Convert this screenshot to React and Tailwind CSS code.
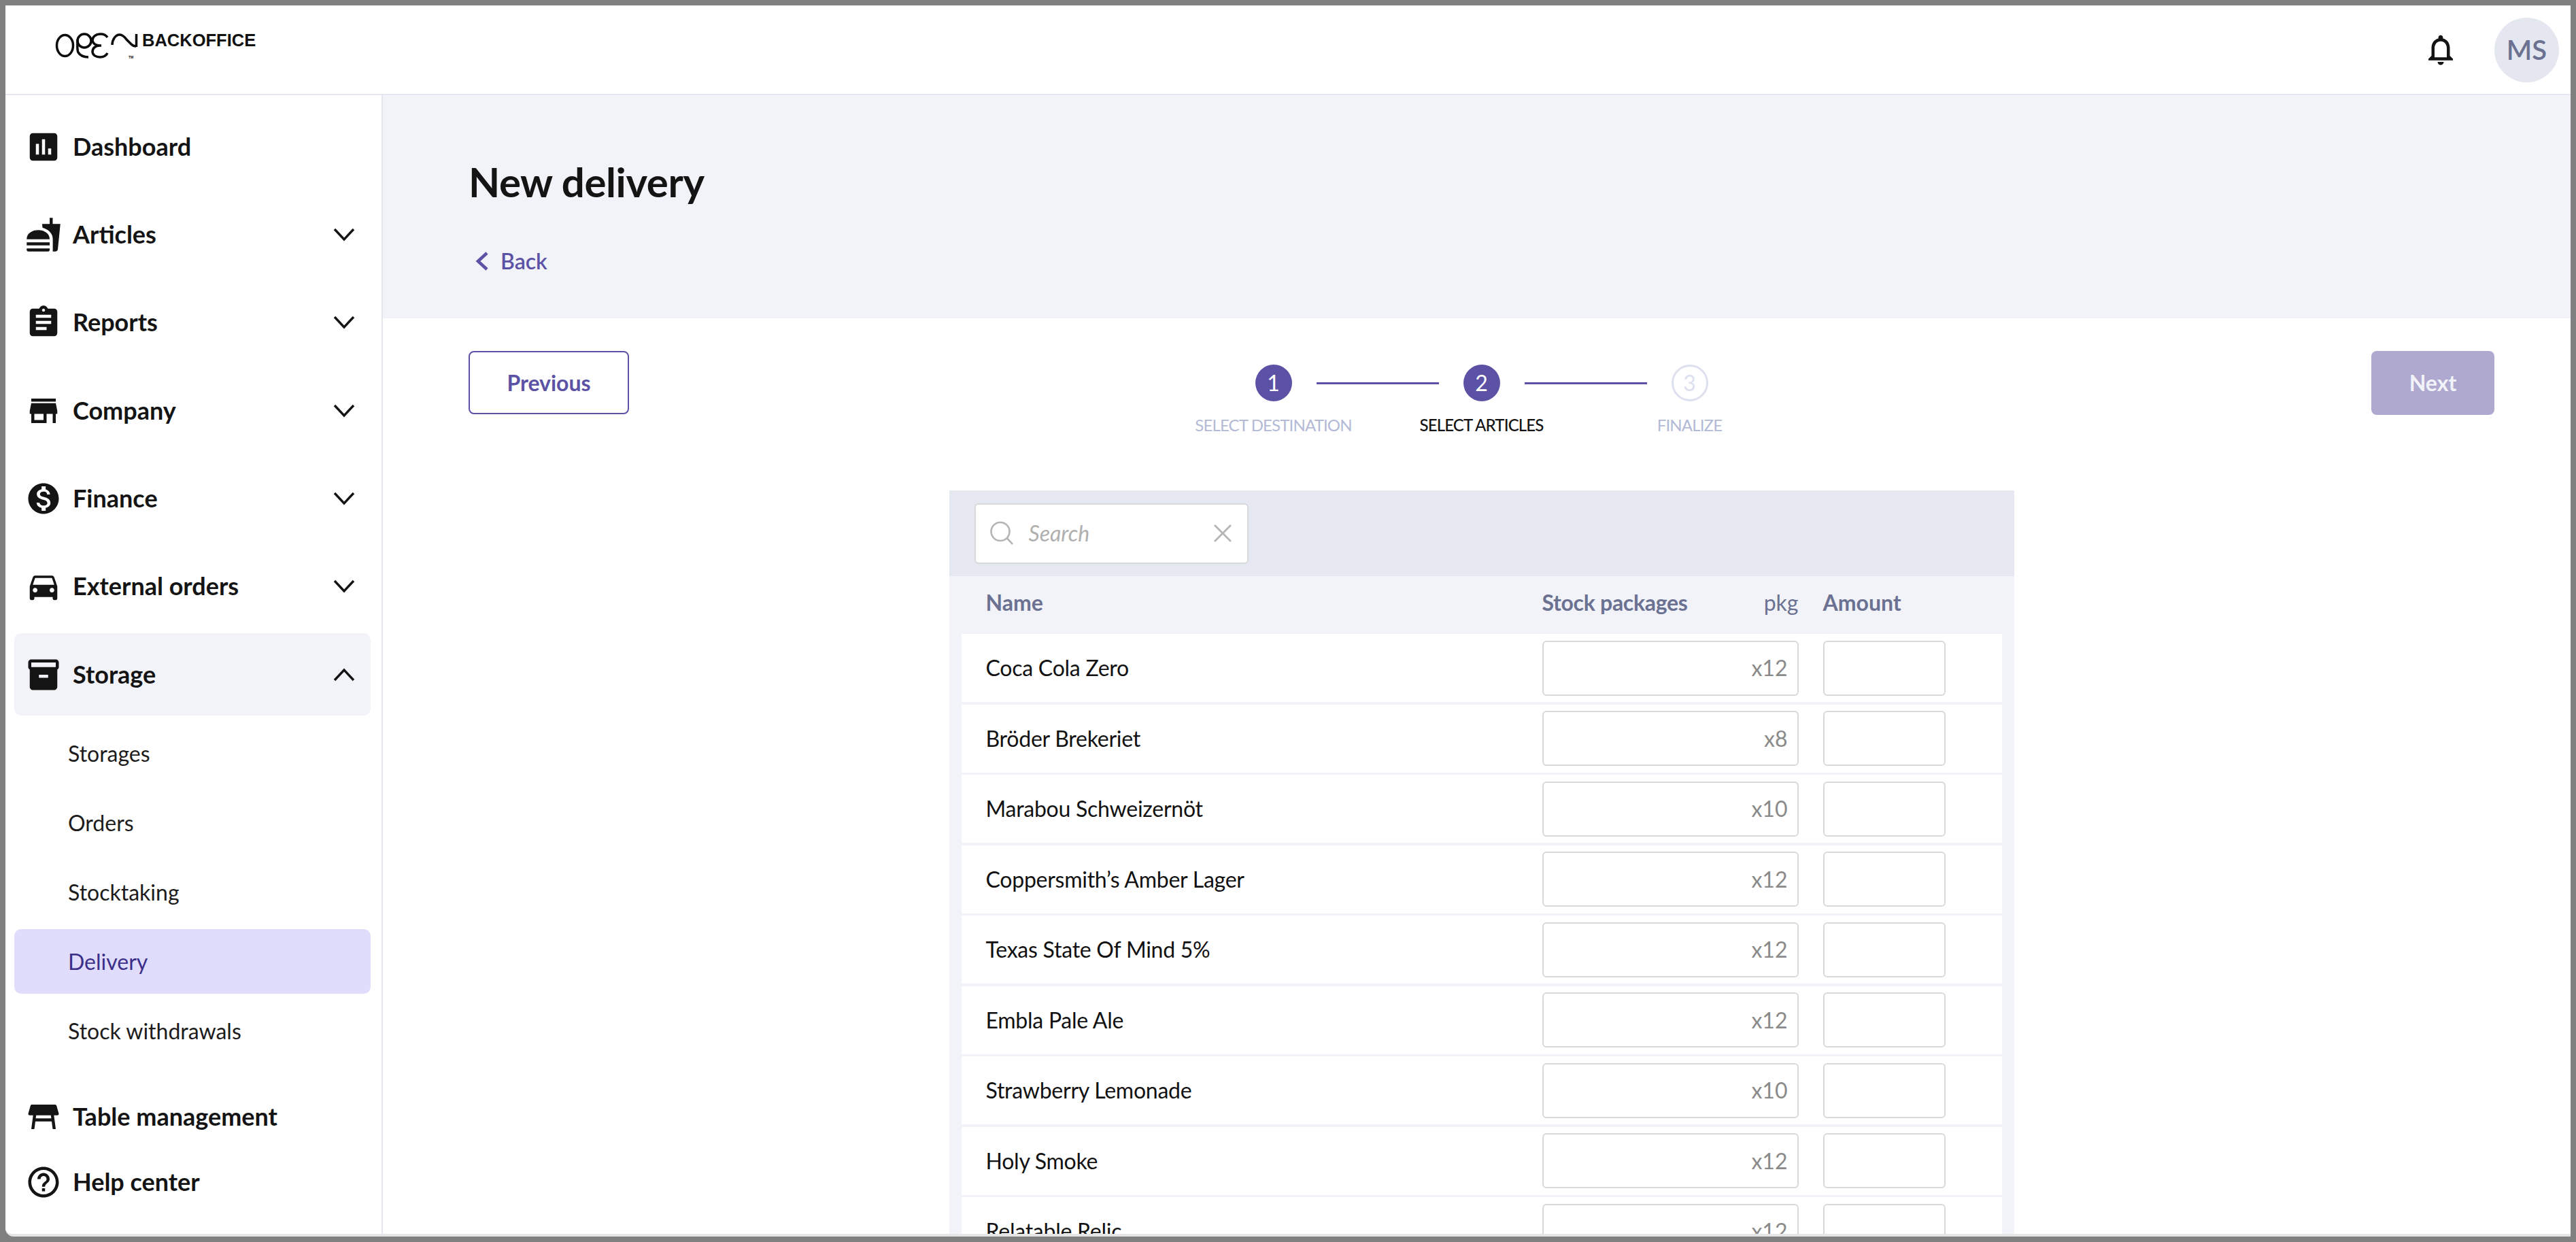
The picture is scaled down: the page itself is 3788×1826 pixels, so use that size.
import React from 'react';
import { MdAssessment, MdFastfood, MdAssignment, MdStore, MdMonetizationOn, MdDirectionsCar, MdInventory2, MdTableRestaurant, MdHelpOutline, MdNotificationsNone } from 'react-icons/md';

function Chevron({ up }) {
  return (
    <svg width="32" height="20" viewBox="0 0 32 20" fill="none" stroke="#141414" strokeWidth="3.4" className="shrink-0">
      <polyline points={up ? '2,18 16,3 30,18' : '2,2 16,17 30,2'} />
    </svg>
  );
}

function Logo() {
  return (
    <svg width="124" height="42" viewBox="80 46 124 42" fill="none" stroke="#0c0c0c" strokeWidth="3.5" className="shrink-0">
      <ellipse cx="95.5" cy="67" rx="12" ry="15.5" />
      <circle cx="124" cy="60" r="10" />
      <path d="M114 58c0 9-1 15 1 19 3 5 9 7 15 7" />
      <path d="M158 55c-2-3-6-5-10-5-7 0-12 4-12 9 0 5 5 8 11 8h2M147 67c-7 0-11 4-11 9 0 5 5 8 11 8 5 0 9-2 11-6" />
      <path d="M165 66c0-8 5-15 11-15 4 0 7 3 10 7l7 7c2 2 4 3 7 3" />
      <path d="M200.5 50v19" />
      <text x="189" y="85.5" fill="#111" stroke="none" fontSize="5" fontWeight="700" fontFamily="Liberation Sans, sans-serif">TM</text>
    </svg>
  );
}

function NavItem({ icon: Icon, label, chevron, up, active }) {
  return (
    <div className={`flex h-[121px] items-center rounded-[10px] pl-[16px] pr-[23px] ${active ? 'bg-[#f2f3f8]' : ''}`}>
      <Icon size={54} color="#141414" className="shrink-0" />
      <span className="ml-[16px] flex-1 pb-[2px] text-[36px] font-bold text-[#141414]">{label}</span>
      {chevron && <Chevron up={up} />}
    </div>
  );
}

function SubItem({ label, active }) {
  return (
    <div className={`flex h-[95px] items-center rounded-[10px] pl-[79px] text-[32px] ${active ? 'bg-[#e0dcfb] text-[#3b2f8a]' : 'text-[#1c1c1c]'}`}>
      {label}
    </div>
  );
}

function Sidebar() {
  return (
    <aside className="flex w-[555px] shrink-0 flex-col border-r-2 border-[#e5e7f0] bg-white pl-[13px] pr-[16px] pt-[15px]">
      <div className="flex flex-col gap-[8.4px]">
        <NavItem icon={MdAssessment} label="Dashboard" />
        <NavItem icon={MdFastfood} label="Articles" chevron />
        <NavItem icon={MdAssignment} label="Reports" chevron />
        <NavItem icon={MdStore} label="Company" chevron />
        <NavItem icon={MdMonetizationOn} label="Finance" chevron />
        <NavItem icon={MdDirectionsCar} label="External orders" chevron />
        <NavItem icon={MdInventory2} label="Storage" chevron up active />
      </div>
      <div className="mt-[8px] flex flex-col gap-[7px]">
        <SubItem label="Storages" />
        <SubItem label="Orders" />
        <SubItem label="Stocktaking" />
        <SubItem label="Delivery" active />
        <SubItem label="Stock withdrawals" />
      </div>
      <div className="mt-[31px] flex h-[96px] items-center pl-[16px]">
        <MdTableRestaurant size={54} color="#141414" className="shrink-0" />
        <span className="ml-[16px] pb-[2px] text-[36px] font-bold text-[#141414]">Table management</span>
      </div>
      <div className="flex h-[96px] items-center pl-[16px]">
        <MdHelpOutline size={54} color="#141414" className="shrink-0" />
        <span className="ml-[16px] pb-[2px] text-[36px] font-bold text-[#141414]">Help center</span>
      </div>
    </aside>
  );
}

function Stepper() {
  return (
    <div className="flex flex-col items-center pt-[20px]">
      <div className="flex items-center">
        <div className="flex h-[54px] w-[54px] items-center justify-center rounded-full bg-[#5c52a5] text-[32px] text-white">1</div>
        <div className="mx-[36px] h-[3px] w-[180px] bg-[#5c52a5]" />
        <div className="flex h-[54px] w-[54px] items-center justify-center rounded-full bg-[#5c52a5] text-[32px] text-white">2</div>
        <div className="mx-[36px] h-[3px] w-[180px] bg-[#5c52a5]" />
        <div className="flex h-[54px] w-[54px] items-center justify-center rounded-full border-[3px] border-[#dde0ee] text-[32px] text-[#dde0ee]">3</div>
      </div>
      <div className="mt-[20px] flex text-center text-[24px] leading-[30px] tracking-[-0.85px]">
        <div className="w-[306px] text-[#b3bad6]">SELECT DESTINATION</div>
        <div className="w-[306px] font-medium text-[#141414]">SELECT ARTICLES</div>
        <div className="w-[306px] text-[#b3bad6]">FINALIZE</div>
      </div>
    </div>
  );
}

const ROWS = [
  ['Coca Cola Zero', 'x12'],
  ['Bröder Brekeriet', 'x8'],
  ['Marabou Schweizernöt', 'x10'],
  ['Coppersmith’s Amber Lager', 'x12'],
  ['Texas State Of Mind 5%', 'x12'],
  ['Embla Pale Ale', 'x12'],
  ['Strawberry Lemonade', 'x10'],
  ['Holy Smoke', 'x12'],
  ['Relatable Relic', 'x12'],
];

function Row({ name, pkg }) {
  return (
    <div className="flex h-[100px] shrink-0 items-center bg-white pl-[36px]">
      <div className="w-[818px] shrink-0 text-[32px] tracking-[-0.25px] text-[#111]">{name}</div>
      <div className="flex h-[81px] w-[377px] shrink-0 items-center justify-end rounded-[6px] border-2 border-[#d9d9d9] pr-[14px] text-[32px] text-[#8a8a8a]">{pkg}</div>
      <div className="ml-[36px] h-[81px] w-[180px] shrink-0 rounded-[6px] border-2 border-[#d9d9d9]" />
    </div>
  );
}

function DeliveryTable() {
  return (
    <div className="pl-[126px] pr-[112px]">
      <div className="mx-auto mt-[81px] w-[1566px] bg-[#f2f3f8]">
        <div className="flex h-[126px] items-center bg-[#e5e8f1] pl-[37px]">
          <div className="flex h-[89px] w-[403px] items-center rounded-[6px] border-2 border-[#d9d9d9] bg-white pl-[20px] pr-[22px]">
            <svg width="36" height="36" viewBox="0 0 36 36" fill="none" stroke="#b5b5b5" strokeWidth="2.6" className="shrink-0">
              <circle cx="16" cy="15.5" r="13.5" />
              <path d="M26 25.5l8 8.5" />
            </svg>
            <span className="ml-[22px] flex-1 text-[32px] italic text-[#b0b0b0]">Search</span>
            <svg width="28" height="28" viewBox="0 0 28 28" fill="none" stroke="#b5b5b5" strokeWidth="2.8" className="shrink-0">
              <path d="M2 2l24 24M26 2L2 26" />
            </svg>
          </div>
        </div>
        <div className="flex flex-col gap-[3.5px] px-[18px]">
          <div className="-mb-[3.5px] flex h-[85px] items-center pb-[8px] pl-[36px] text-[32px] text-[#6b7191]">
            <div className="w-[818px] shrink-0 font-bold">Name</div>
            <div className="flex w-[377px] shrink-0 justify-between">
              <span className="font-bold tracking-[-0.3px]">Stock packages</span>
              <span>pkg</span>
            </div>
            <div className="ml-[36px] font-bold">Amount</div>
          </div>
          {ROWS.map(([n, p]) => <Row key={n} name={n} pkg={p} />)}
        </div>
      </div>
    </div>
  );
}

function Main() {
  return (
    <main className="flex min-w-0 flex-1 flex-col overflow-hidden bg-white">
      <div className="h-[328px] shrink-0 bg-[#f2f3f8] pl-[126px] pt-[87px]">
        <h1 className="text-[60px] font-bold leading-[80px] tracking-[-0.4px] text-[#141414]">New delivery</h1>
        <div className="mt-[57px] flex items-center pl-[10px] text-[32px] font-semibold leading-[40px] text-[#5c52a5]">
          <svg width="20" height="28" viewBox="0 0 20 28" fill="none" stroke="#5c52a5" strokeWidth="4.6" className="shrink-0">
            <polyline points="17,2 4,14 17,26" />
          </svg>
          <span className="ml-[17px]">Back</span>
        </div>
      </div>
      <div className="grid grid-cols-[1fr_auto_1fr] items-start pl-[126px] pr-[112px] pt-[48px]">
        <div className="flex h-[93px] w-[236px] items-center justify-center rounded-[8px] border-2 border-[#5c52a5] text-[32px] font-bold text-[#5c52a5]">Previous</div>
        <Stepper />
        <div className="flex h-[94px] w-[181px] items-center justify-center justify-self-end rounded-[8px] bg-[#afa8cf] text-[32px] font-bold text-[#f2f3f8]">Next</div>
      </div>
      <DeliveryTable />
    </main>
  );
}

export default function App() {
  return (
    <div className="h-screen w-screen overflow-hidden bg-[#808080] p-[8px] font-['Lato',sans-serif]">
      <div className="flex h-full flex-col overflow-hidden rounded-bl-[12px] border-b-4 border-[#e5e5e5] bg-white">
        <header className="flex h-[132px] shrink-0 items-center border-b-2 border-[#e5e7f0] bg-white pl-[72px] pr-[17px]">
          <div className="flex items-start self-start pt-[38px]">
            <Logo />
            <span className="ml-[5px] font-['Liberation_Sans',sans-serif] text-[25.5px] font-bold leading-[26px] text-[#111]">BACKOFFICE</span>
          </div>
          <div className="ml-auto flex items-center">
            <MdNotificationsNone size={54} color="#141414" />
            <div className="ml-[52px] flex h-[95px] w-[95px] items-center justify-center rounded-full bg-[#e5e7f0] text-[40px] font-semibold text-[#6b7191]">MS</div>
          </div>
        </header>
        <div className="flex min-h-0 flex-1">
          <Sidebar />
          <Main />
        </div>
      </div>
    </div>
  );
}
